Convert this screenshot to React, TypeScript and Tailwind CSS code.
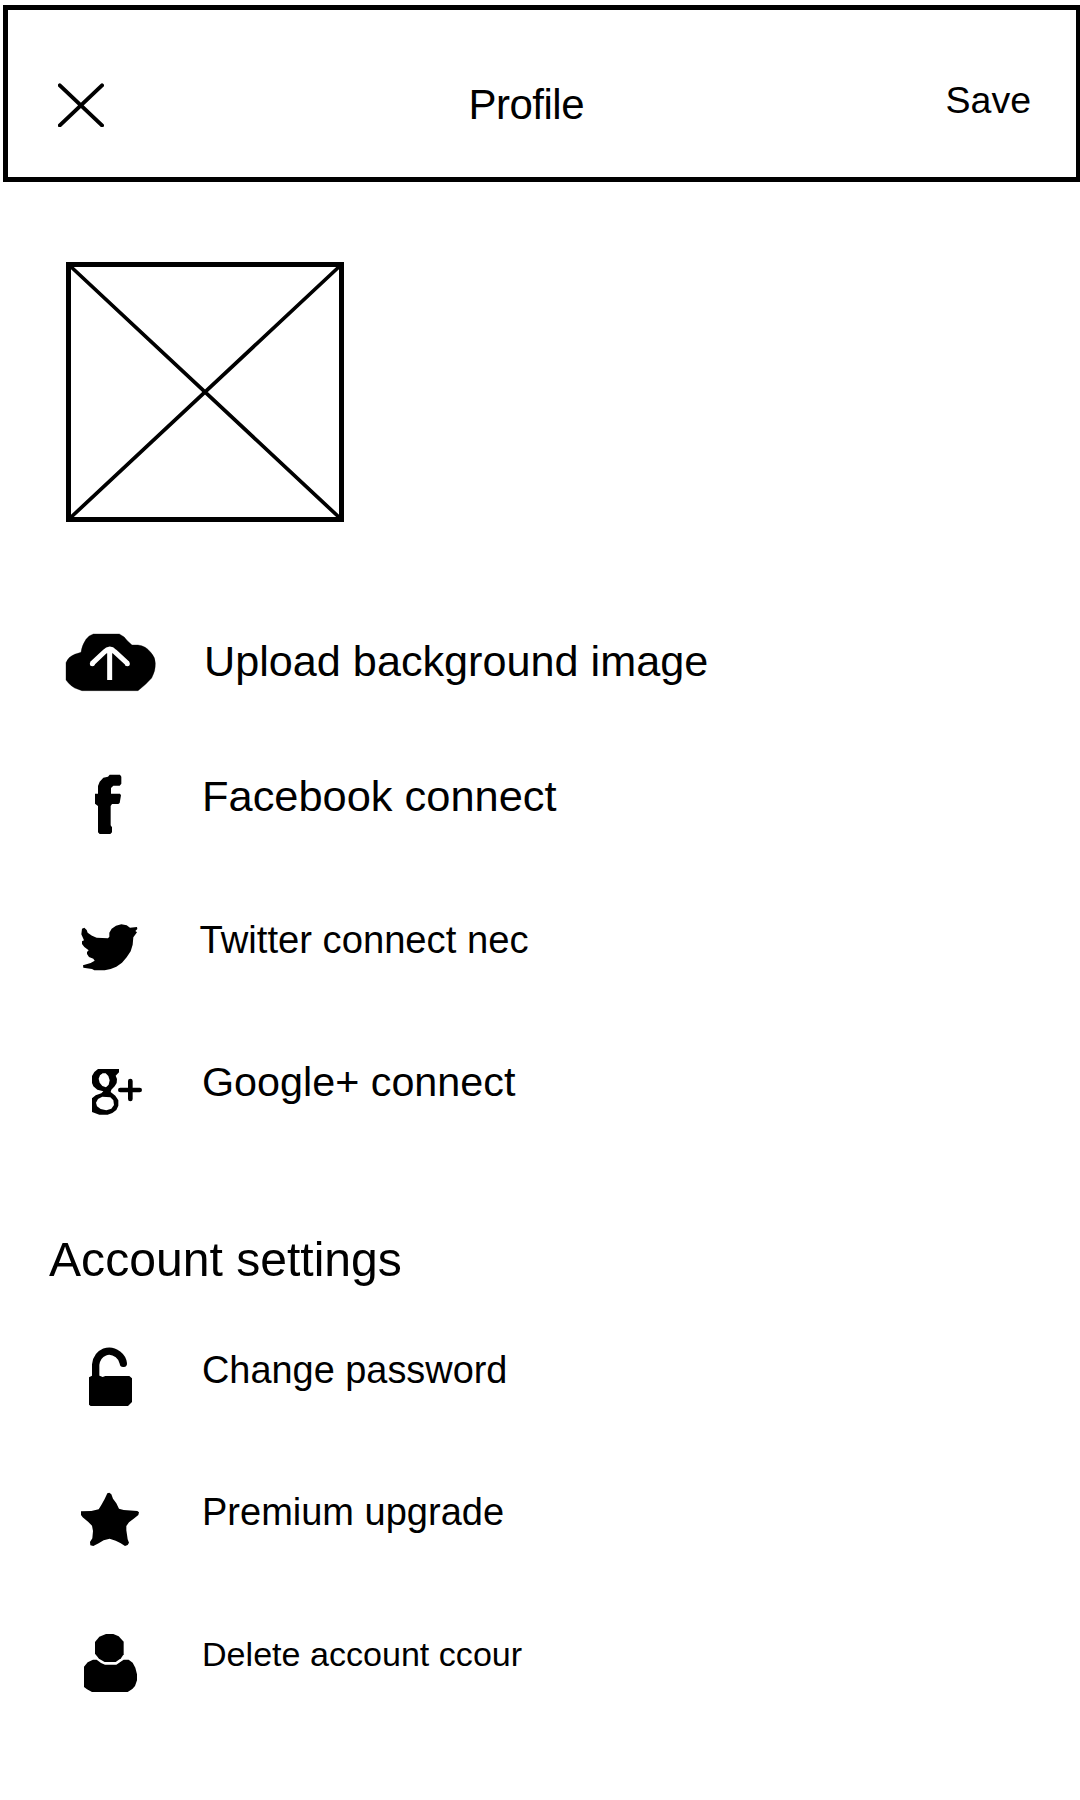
import type { ReactNode } from "react";

function CloudIcon() {
  return (
    <svg className="mt-[29px] h-[80px] w-[120px] shrink-0" viewBox="0 0 360 240">
      <path
        d="M130 42H208Q222 48 232 62L246 75H264Q288 78 302 97Q316 112 316 130Q317 152 305 174Q288 194 264 212H96Q70 206 56 190L48 180V128Q55 110 74 103L93 97Q95 78 108 58Q116 46 130 42Z"
        stroke="#000"
        strokeWidth="1"
        strokeLinejoin="round"
      />
      <path d="M179 180V92M126 131L163 96Q179 80 194 95L233 131" fill="none" stroke="#fff" strokeWidth="15" />
      <circle cx="127" cy="131" r="7.5" fill="#fff" />
      <circle cx="232" cy="131" r="7.5" fill="#fff" />
    </svg>
  );
}

function FacebookIcon() {
  return (
    <svg className="mt-[25px] mr-[10px] ml-[20px] h-[90px] w-[90px] shrink-0" viewBox="0 0 270 270">
      <path d="M119 44H150L154 50V71L149 77H130L123 84V101H150L153 106L149 129L145 132H126L122 138V196L126 202V217L121 222H89L84 217V138L75 131V101H84V78L89 65L100 53L114 50Z" />
    </svg>
  );
}

function TwitterIcon() {
  return (
    <svg className="mt-[33px] mr-[10px] ml-[20px] h-[70px] w-[90px] shrink-0" viewBox="0 0 270 210">
      <path d="M36 56L43 53L50 60L53 68L66 77L80 83L114 85L118 80V68L125 56L138 47L154 43L170 46L180 53L201 51L202 57L196 63L201 67L195 75L190 82L188 104L182 124L170 142L156 158L139 170L122 177L104 181H73L66 177L40 173L39 166L62 159L74 152L70 146L57 141L51 132V126L56 121L43 111L36 102V94L42 91L34 73Z" />
    </svg>
  );
}

function GooglePlusIcon() {
  return (
    <svg className="mt-[31px] mr-[10px] ml-[20px] h-[80px] w-[90px] shrink-0" viewBox="0 0 270 240">
      <path
        fillRule="evenodd"
        d="M84 57H147V67L137 77L141 87L140 99L134 109L124 119L122 126L136 137L145 151V167L139 180L127 189L113 194H88L66 186V145L77 136L94 130L100 124L82 119L70 109L66 99V78L73 66ZM98 70L90 76L86 86L89 98L97 108L108 112L116 104L119 91L115 78L107 70ZM97 140L84 147L78 158L81 169L92 177L109 181L124 176L132 165L130 151L121 142Z"
      />
      <path d="M181 93V147M151 120H209" stroke="#000" strokeWidth="14" strokeLinecap="round" />
    </svg>
  );
}

function UnlockIcon() {
  return (
    <svg className="mt-[24px] mr-[10px] ml-[20px] h-[90px] w-[90px] shrink-0" viewBox="0 0 270 270">
      <path d="M77 150V104Q80 76 104 66Q124 58 144 73Q158 84 160 100" fill="none" stroke="#000" strokeWidth="22" strokeLinecap="round" />
      <path d="M57 142L66 137H89L98 141L106 138H178L186 145V216L174 228H62L57 224Z" />
    </svg>
  );
}

function StarIcon() {
  return (
    <svg className="mt-[31px] mr-[10px] ml-[20px] h-[80px] w-[90px] shrink-0" viewBox="0 0 270 240">
      <path d="M112 40L118 38L124 43L129 56L139 70L147 86L161 90L202 93L207 97L205 105L191 116L177 127L169 138V151L173 178L177 188L173 195L165 198L151 189L137 182L119 176L101 181L86 190L70 198L61 196L60 186L67 175L69 153L66 137L55 126L38 112L33 105V94L64 93L86 88L94 75L104 57Z" />
    </svg>
  );
}

function UserIcon() {
  return (
    <svg className="mt-[29px] mr-[10px] ml-[20px] h-[90px] w-[90px] shrink-0" viewBox="0 0 270 270">
      <path d="M108 42H130L146 49L161 65V103L153 115L137 126H104L87 116L75 101V66L88 50Z" />
      <path d="M53 127L69 119H80L93 129L105 134H139L151 126L161 119H176L188 128L196 143L201 163V181L195 198L187 207L173 216H66L51 208L42 201V140Z" />
    </svg>
  );
}

type RowProps = { icon: ReactNode; row: string; text: string; label: string };

function Row({ icon, row, text, label }: RowProps) {
  return (
    <li className={`flex items-start pl-[50px] ${row}`}>
      {icon}
      <span className={`leading-[48px] whitespace-nowrap ${text}`}>{label}</span>
    </li>
  );
}

export default function App() {
  return (
    <main className="h-[1800px] w-[1080px] overflow-hidden bg-white pt-[5px] font-['Liberation_Sans',Arial,sans-serif] text-black">
      <header className="ml-[3px] flex h-[177px] w-[1078px] items-start border-[5px] border-black pr-[45px] pl-[50px]">
        <svg className="mt-[73px] h-[44px] w-[46px] shrink-0" viewBox="0 0 46 44">
          <path d="M1.8 2.4L44 42.4M44 2.4L1.8 42.4" stroke="#000" strokeWidth="4" strokeLinecap="round" />
        </svg>
        <h1 className="mt-[71px] ml-[364.5px] text-[42px] leading-[48px] tracking-[-0.5px]">Profile</h1>
        <button className="mt-[66px] ml-auto text-[37.5px] leading-[48px]">Save</button>
      </header>

      <div className="mt-[80px] ml-[66px] h-[260px] w-[278px] border-[5px] border-black">
        <svg className="h-full w-full overflow-visible" viewBox="0 0 268 250">
          <path d="M-3 -3L271 253M271 -3L-3 253" stroke="#000" strokeWidth="3.7" strokeLinecap="round" />
        </svg>
      </div>

      <ul className="mt-[69px]">
        <Row icon={<CloudIcon />} row="h-[144px]" text="mt-[46px] ml-[34px] text-[43.2px]" label="Upload background image" />
        <Row icon={<FacebookIcon />} row="h-[142px]" text="mt-[37px] ml-[32px] text-[43.4px]" label="Facebook connect" />
        <Row icon={<TwitterIcon />} row="h-[142px]" text="mt-[39px] ml-[29.5px] text-[38.2px]" label="Twitter connect nec" />
        <Row icon={<GooglePlusIcon />} row="h-[143px]" text="mt-[39px] ml-[32px] text-[41.3px]" label="Google+ connect" />
      </ul>

      <h2 className="h-[144px] pt-[73px] pl-[49px] text-[48.1px] leading-[48px]">Account settings</h2>

      <ul>
        <Row icon={<UnlockIcon />} row="h-[143px]" text="mt-[40px] ml-[32px] text-[37.9px]" label="Change password" />
        <Row icon={<StarIcon />} row="h-[142px]" text="mt-[39px] ml-[32px] text-[38px]" label="Premium upgrade" />
        <Row icon={<UserIcon />} row="h-[143px]" text="mt-[39px] ml-[32px] text-[34.1px]" label="Delete account ccour" />
      </ul>
    </main>
  );
}
